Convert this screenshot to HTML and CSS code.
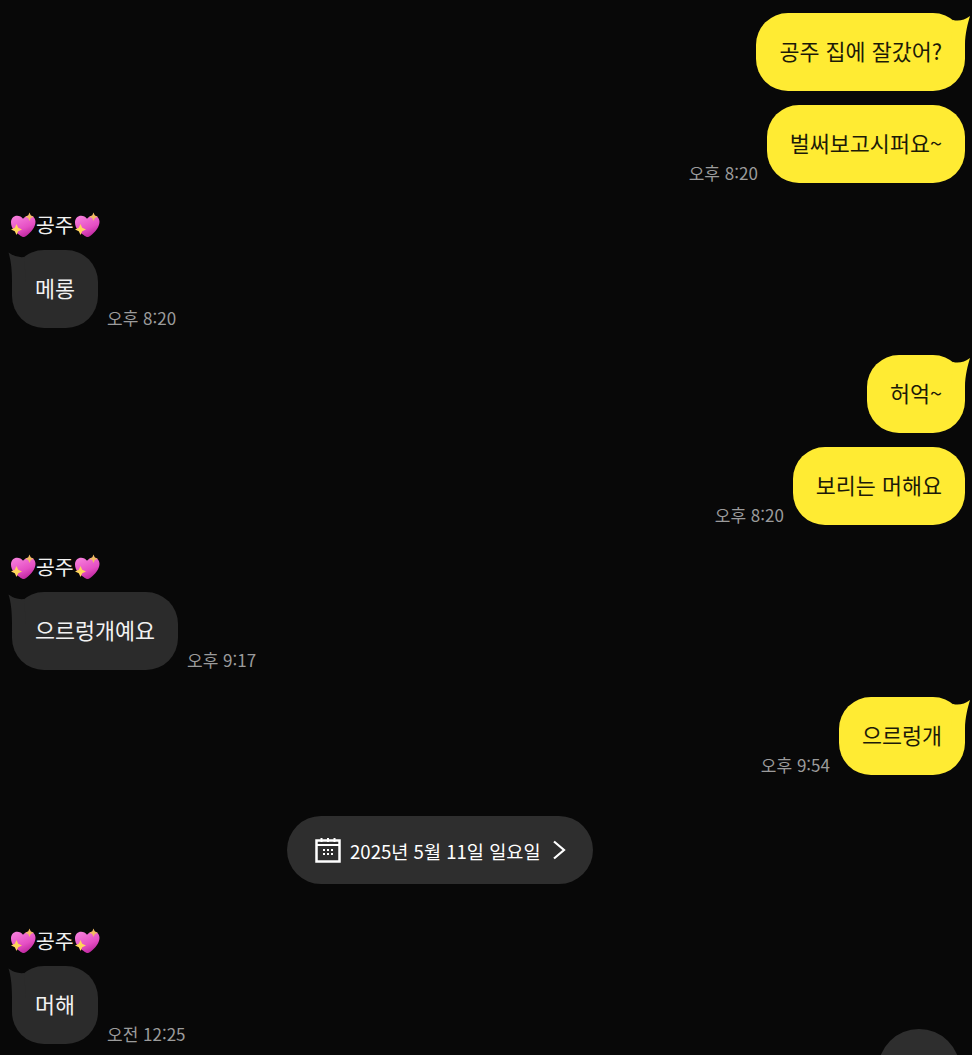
FILE: index.html
```html
<!DOCTYPE html>
<html lang="ko">
<head>
<meta charset="utf-8">
<title>채팅</title>
<link rel="stylesheet" href="styles.css">
</head>
<body>
<svg class="defs" width="0" height="0" aria-hidden="true">
  <defs>
    <linearGradient id="hg" x1="0.2" y1="0" x2="0.7" y2="1">
      <stop offset="0" stop-color="#f77fdc"/>
      <stop offset="0.6" stop-color="#e54fc4"/>
      <stop offset="1" stop-color="#b82199"/>
    </linearGradient>
    <symbol id="heart" viewBox="0 0 26 26">
      <path d="M13 25c-1-.1-2-.8-3.700-2.200C5.300 19.700 1 16.500 1 10.500 1 6.300 3.800 3.700 7.100 3.700c2.500 0 4.600 1.100 5.900 3.100 1.600-2.100 3.800-3.400 6.400-3.400 3.500 0 6.100 2.700 6.100 6.400 0 5.500-4.700 10.700-8.700 13.600-1.700 1.200-2.700 1.700-3.800 1.600z" fill="url(#hg)"/>
      <path d="M19.500 .5l1.300 3 3 1.300-3 1.300-1.300 3-1.300-3-3-1.300 3-1.300z" fill="#f2bd62"/>
      <path d="M6.500 12l1.700 3.800 3.800 1.700-3.800 1.700-1.700 3.800-1.700-3.800L1 17.500l3.800-1.700z" fill="#ffd65a"/>
    </symbol>
    <symbol id="tail-r" viewBox="0 0 20 36">
      <path d="M2 7Q11 9 19 3C17 10 14 20 14 32L0 32Z"/>
    </symbol>
    <symbol id="tail-l" viewBox="0 0 20 36">
      <path d="M16 7Q8 8 .5 2.500C3 10 4 20 4 32L18 32Z"/>
    </symbol>
  </defs>
</svg>
<main class="chat">
  <div class="row me">
    <div class="bubble yellow">공주 집에 잘갔어?<svg class="tail tail-r"><use href="#tail-r"/></svg></div>
  </div>
  <div class="row me close">
    <span class="time">오후 8:20</span>
    <div class="bubble yellow">벌써보고시퍼요~</div>
  </div>

  <div class="name">
    <svg class="heart"><use href="#heart"/></svg><span>공주</span><svg class="heart"><use href="#heart"/></svg>
  </div>
  <div class="row them">
    <div class="bubble gray">메롱<svg class="tail tail-l"><use href="#tail-l"/></svg></div>
    <span class="time">오후 8:20</span>
  </div>

  <div class="row me group">
    <div class="bubble yellow">허억~<svg class="tail tail-r"><use href="#tail-r"/></svg></div>
  </div>
  <div class="row me close">
    <span class="time">오후 8:20</span>
    <div class="bubble yellow">보리는 머해요</div>
  </div>

  <div class="name">
    <svg class="heart"><use href="#heart"/></svg><span>공주</span><svg class="heart"><use href="#heart"/></svg>
  </div>
  <div class="row them">
    <div class="bubble gray">으르렁개예요<svg class="tail tail-l"><use href="#tail-l"/></svg></div>
    <span class="time">오후 9:17</span>
  </div>

  <div class="row me group">
    <span class="time">오후 9:54</span>
    <div class="bubble yellow">으르렁개<svg class="tail tail-r"><use href="#tail-r"/></svg></div>
  </div>

  <div class="date">
    <svg class="cal" viewBox="0 0 26 26" fill="none" stroke="#fff">
      <rect x="1.500" y="3.500" width="23" height="21" stroke-width="2.500"/>
      <path d="M1.500 8h23" stroke-width="2"/>
      <path d="M6.500 1v4M13 1v4M19.500 1v4" stroke-width="2"/>
      <path d="M8 13h2M12 13h2M16 13h2M8 17h2M12 17h2M16 17h2" stroke-width="2"/>
    </svg>
    <span>2025년 5월 11일 일요일</span>
    <svg class="chev" viewBox="0 0 14 20" fill="none" stroke="#fff" stroke-width="2.200"><path d="M2 1.500l10 8.500-10 8.500"/></svg>
  </div>

  <div class="name after-date">
    <svg class="heart"><use href="#heart"/></svg><span>공주</span><svg class="heart"><use href="#heart"/></svg>
  </div>
  <div class="row them">
    <div class="bubble gray">머해<svg class="tail tail-l"><use href="#tail-l"/></svg></div>
    <span class="time">오전 12:25</span>
  </div>
</main>
<div class="scroll-btn"><div class="scroll-circle"></div></div>
</body>
</html>
```

FILE: styles.css
```css
html, body {
  margin: 0;
  height: 100%;
  background: #080808;
  overflow: hidden;
}
body {
  position: relative;
  font-family: "Noto Sans CJK KR", "Noto Sans", sans-serif;
}
.defs { position: absolute; }
.chat {
  display: flex;
  flex-direction: column;
  padding: 13px 7px 0 10px;
}
.row {
  display: flex;
  align-items: flex-end;
  gap: 9px;
}
.me { justify-content: flex-end; }
.close { margin-top: 14px; }
.group { margin-top: 27px; }
.them { margin-left: 2px; }
.bubble {
  position: relative;
  height: 78px;
  box-sizing: border-box;
  padding: 0 23px 3px;
  display: flex;
  align-items: center;
  border-radius: 32px;
  font-size: 21.75px;
  white-space: nowrap;
}
.yellow { background: #ffeb33; color: #1c1a08; }
.gray {
  background: #2b2b2b;
  color: #f2f2f2;
}
.tail {
  position: absolute;
  top: 0;
  width: 20px;
  height: 36px;
}
.tail-r { right: -6px; fill: #ffeb33; }
.tail-l { left: -4px; fill: #2b2b2b; }
.time {
  font-size: 17px;
  line-height: 20px;
  color: #9b9b9b;
  white-space: nowrap;
}
.name {
  display: flex;
  align-items: center;
  height: 30px;
  margin: 27px 0 10px;
  font-size: 20.5px;
  color: #f2f2f2;
}
.name span { padding-bottom: 3px; }
.after-date { margin-top: 42px; }
.heart {
  width: 26px;
  height: 26px;
  flex: none;
}
.date {
  align-self: flex-start;
  margin: 41px 0 0 277px;
  width: 306px;
  height: 68px;
  box-sizing: border-box;
  padding: 0 28px;
  display: flex;
  align-items: center;
  gap: 9px;
  background: #2e2e2e;
  border-radius: 34px;
  color: #fff;
  font-size: 18.6px;
  white-space: nowrap;
}
.cal { width: 26px; height: 26px; flex: none; }
.chev { width: 14px; height: 20px; margin-left: 2px; flex: none; }
.scroll-btn {
  position: absolute;
  left: 878px;
  bottom: 0;
  width: 82px;
  height: 26px;
  overflow: hidden;
}
.scroll-circle {
  width: 82px;
  height: 82px;
  border-radius: 50%;
  background: #2e2e2e;
}
```
